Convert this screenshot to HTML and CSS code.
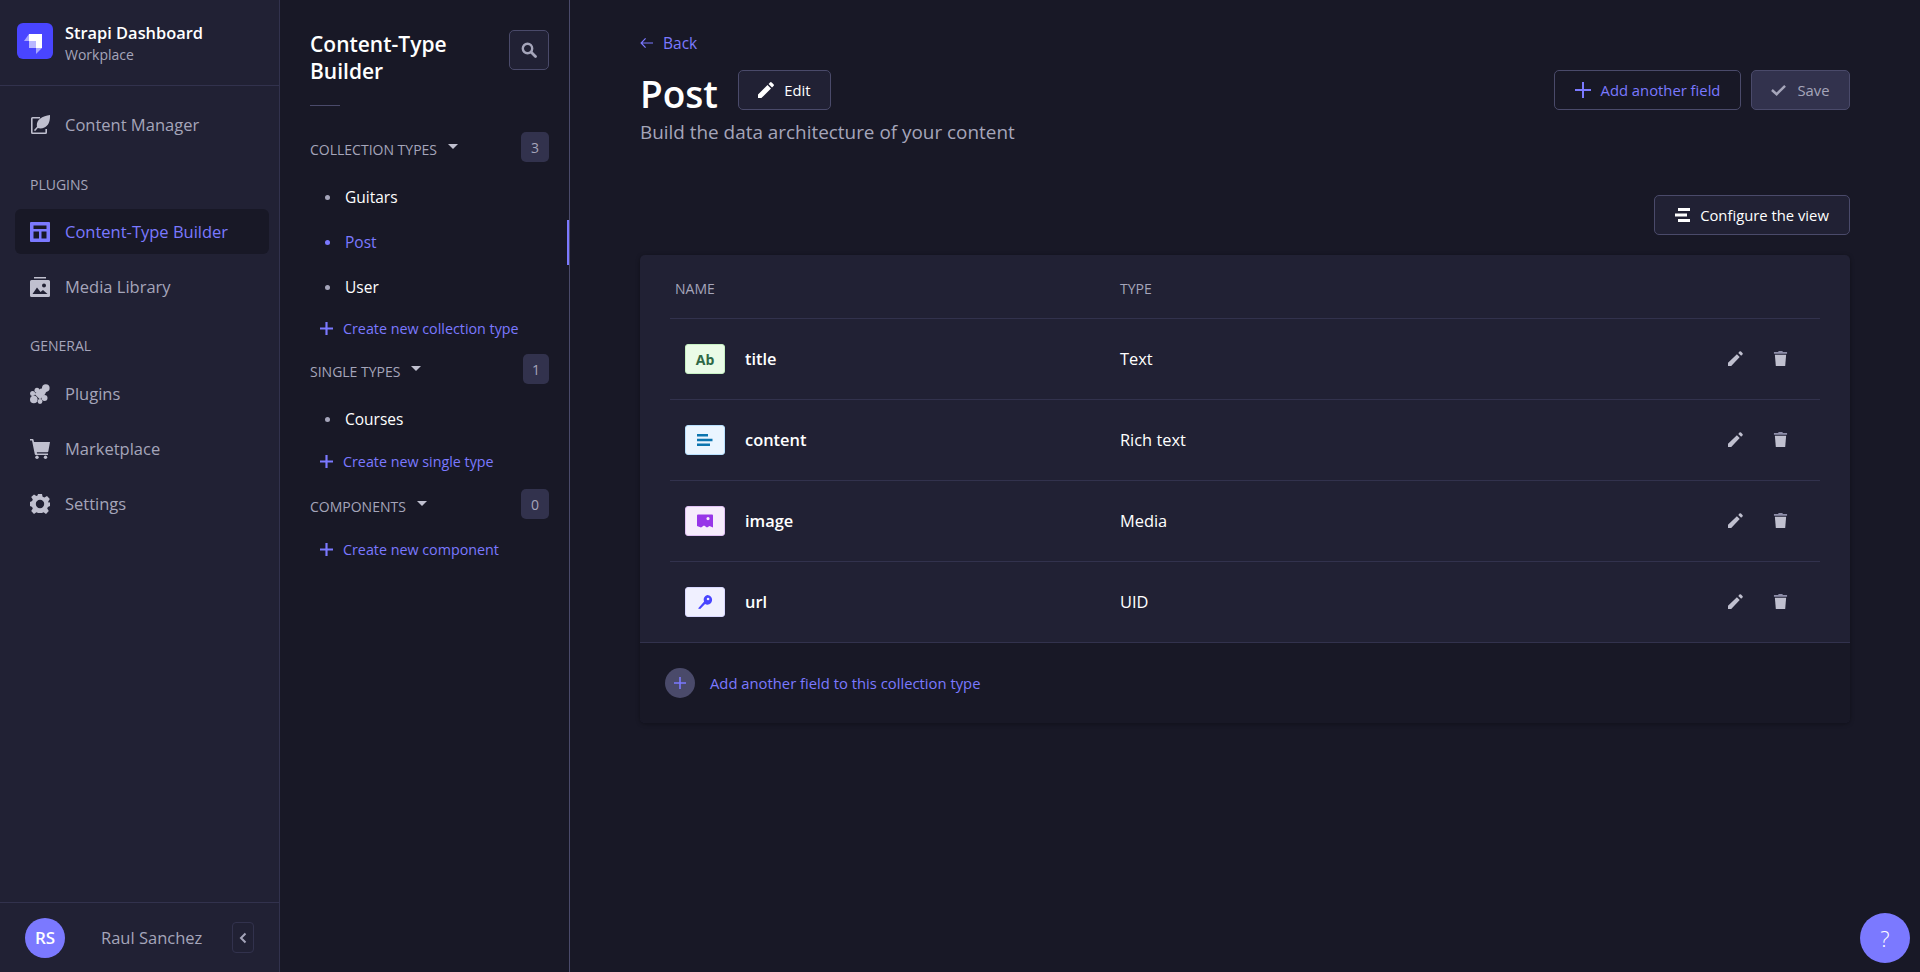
FILE: index.html
```html
<!doctype html>
<html>
<head>
	<meta charset="utf-8">
	<title>Strapi Dashboard</title>
	<link rel="stylesheet" href="styles.css">
</head>
<body>
	<nav class="nav">
		<div class="brand">
			<svg class="logo" viewBox="0 0 36 36"><rect width="36" height="36" rx="6" fill="#4945ff"/><path d="M12 11h13v14h-6v-7h-7z" fill="#fff"/><path d="M12 11v7H7z" fill="#aaa8ff"/><path d="M12 18h7v7h-7z" fill="#b9b8ff"/><path d="M19 25h6l-6 6z" fill="#aaa8ff"/></svg>
			<div>
				<div class="brand-name">Strapi Dashboard</div>
				<div class="brand-sub">Workplace</div>
			</div>
		</div>
		<div class="nav-body">
			<a class="nav-item">
				<svg viewBox="0 0 20 20"><path d="M10 2H2.500A1.500 1.500 0 0 0 1 3.500v14A1.500 1.500 0 0 0 2.500 19h13a1.500 1.500 0 0 0 1.500-1.500V14h-1.600v3.400H2.600V3.600H10z"/><path d="M20 0c.2 5.500-1.200 10.500-5.600 12.600-2.400 1.100-5 1-6.600.4L5 16.200 4 15l3-3.300C6.300 8.600 7.500 5.800 10 3.800 12.800 1.500 16.500.6 20 0z"/></svg>
				Content Manager
			</a>
			<div class="nav-label first">PLUGINS</div>
			<a class="nav-item active">
				<svg viewBox="0 0 20 20"><path fill-rule="evenodd" d="M1 0h18a1 1 0 0 1 1 1v18a1 1 0 0 1-1 1H1a1 1 0 0 1-1-1V1a1 1 0 0 1 1-1zm2.500 3.500v3.500h13V3.500zm0 6v7h5.500v-7zm8 0v7h5v-7z"/></svg>
				Content-Type Builder
			</a>
			<a class="nav-item">
				<svg viewBox="0 0 20 20"><path d="M4 0h12v1.500H4z"/><path fill-rule="evenodd" d="M1.500 3h17A1.500 1.500 0 0 1 20 4.500v14a1.500 1.500 0 0 1-1.500 1.500h-17A1.500 1.500 0 0 1 0 18.500v-14A1.500 1.500 0 0 1 1.500 3zM14 6.500a2 2 0 1 0 0 4 2 2 0 0 0 0-4zM2.500 17h15l-4.500-4-2.500 2-3.500-4.500z"/></svg>
				Media Library
			</a>
			<div class="nav-label">GENERAL</div>
			<a class="nav-item">
				<svg viewBox="0 0 20 20"><path d="M10.500 4.500 15.500 9.500 10 15.500 4.500 10z"/><circle cx="15.800" cy="4" r="3.800"/><circle cx="7" cy="6.300" r="2.500"/><circle cx="3.800" cy="15.500" r="3.800"/><circle cx="14.500" cy="14" r="3"/><circle cx="2.600" cy="9.500" r="2.500"/><circle cx="10" cy="17.500" r="2.400"/><path d="M13 3l4 4-3 4-5-4z"/></svg>
				Plugins
			</a>
			<a class="nav-item">
				<svg viewBox="0 0 20 20"><path d="M0 0h2.500a1 1 0 0 1 1 .8L4 3h16l-1.700 9.500a1 1 0 0 1-1 .8H6.800l.3 1.200H18V16H5.800a1 1 0 0 1-1-.8L2 1.500H0z"/><circle cx="7" cy="18.300" r="1.700"/><circle cx="15.500" cy="18.300" r="1.700"/></svg>
				Marketplace
			</a>
			<a class="nav-item">
				<svg viewBox="0 0 20 20"><path fill-rule="evenodd" d="M8 0h4l.6 2.800 1.800.8L17 2l2.800 3-1.600 2.400.7 1.700L20 8v4l-2.100.9-.7 1.700L18.800 17 16 20l-2.400-1.700-1.700.7H8.100l-1.700-.7L4 20l-2.800-3 1.600-2.400-.7-1.700L0 12V8l2.100-.9.700-1.700L1.200 3 4 .4l2.400 1.600 1.100-.5zM10 5.800a4.200 4.200 0 1 0 0 8.400 4.200 4.200 0 0 0 0-8.400z"/></svg>
				Settings
			</a>
		</div>
		<div class="nav-foot">
			<span class="avatar">RS</span>
			<span class="user">Raul Sanchez</span>
			<span class="collapse"><svg viewBox="0 0 8 12"><path d="M6.500 1.500 2 6l4.500 4.500" fill="none" stroke="#a5a5ba" stroke-width="2"/></svg></span>
		</div>
	</nav>

	<aside class="sub">
		<div class="sub-head">
			<h2>Content-Type Builder</h2>
			<span class="search"><svg viewBox="0 0 16 16"><circle cx="6.500" cy="6.500" r="4.700" fill="none" stroke="#a5a5ba" stroke-width="2.400"/><path d="M10 10l4.500 4.500" stroke="#a5a5ba" stroke-width="2.800" stroke-linecap="round"/></svg></span>
		</div>
		<div class="sub-rule"></div>

		<div class="group-head">
			<span>COLLECTION TYPES</span><i class="caret"></i>
			<b class="count">3</b>
		</div>
		<ul class="links">
			<li>Guitars</li>
			<li class="current">Post</li>
			<li>User</li>
		</ul>
		<a class="create"><svg viewBox="0 0 12 12"><path d="M5 0h2v5h5v2H7v5H5V7H0V5h5z"/></svg>Create new collection type</a>

		<div class="group-head">
			<span>SINGLE TYPES</span><i class="caret"></i>
			<b class="count one">1</b>
		</div>
		<ul class="links">
			<li>Courses</li>
		</ul>
		<a class="create tall"><svg viewBox="0 0 12 12"><path d="M5 0h2v5h5v2H7v5H5V7H0V5h5z"/></svg>Create new single type</a>

		<div class="group-head">
			<span>COMPONENTS</span><i class="caret"></i>
			<b class="count">0</b>
		</div>
		<a class="create only"><svg viewBox="0 0 12 12"><path d="M5 0h2v5h5v2H7v5H5V7H0V5h5z"/></svg>Create new component</a>
	</aside>

	<main class="main">
		<a class="back"><svg viewBox="0 0 14 12"><path d="M6 1 1.200 6 6 11M1.500 6H14" fill="none" stroke="#7b79ff" stroke-width="1.300"/></svg>Back</a>
		<div class="title-row">
			<h1>Post</h1>
			<a class="btn edit"><svg viewBox="0 0 16 16"><path d="M0 16v-3.400L9.500 3l3.500 3.500L3.400 16zM10.600 2l1.400-1.500a1.200 1.200 0 0 1 1.700 0l1.800 1.800a1.200 1.200 0 0 1 0 1.700L14 5.400z" fill="#fff"/></svg>Edit</a>
			<div class="actions">
				<a class="btn add"><svg viewBox="0 0 16 16"><path d="M7 0h2v7h7v2H9v7H7V9H0V7h7z" fill="#7b79ff"/></svg>Add another field</a>
				<a class="btn save"><svg viewBox="0 0 16 12"><path d="M1 6l5 4.500L15 1.500" fill="none" stroke="#a5a5ba" stroke-width="2.600"/></svg>Save</a>
			</div>
		</div>
		<p class="lead">Build the data architecture of your content</p>
		<div class="view-row">
			<a class="btn configure"><svg viewBox="0 0 15 14"><path d="M3 0h12v3H3zM0 5.500h12v3H0zM3 11h12v3H3z" fill="#fff"/></svg>Configure the view</a>
		</div>

		<section class="card">
			<div class="card-head">
				<span class="col-name">NAME</span>
				<span class="col-type">TYPE</span>
			</div>
			<div class="row">
				<span class="col-name"><span class="tag green">Ab</span>title</span>
				<span class="col-type">Text</span>
				<span class="tools">
					<svg viewBox="0 0 16 16"><path d="M0 16v-3.400L9.500 3.500l3 3L3.400 16zM11 2l1.200-1.400a1.200 1.200 0 0 1 1.700 0l1.500 1.500a1.200 1.200 0 0 1 0 1.700L14 5z"/></svg>
					<svg viewBox="0 0 14 16"><path d="M5 0h4l.5 1H14v2H0V1h4.500z" fill="#8e8ea9"/><path d="M1 4h12l-1 12H2z"/></svg>
				</span>
			</div>
			<div class="row">
				<span class="col-name"><span class="tag blue"><svg viewBox="0 0 16 12"><path d="M0 0h11v2.400H0zM0 4.800h15.500v2.400H0zM0 9.600h13v2.400H0z" fill="#0c75af"/></svg></span>content</span>
				<span class="col-type">Rich text</span>
				<span class="tools">
					<svg viewBox="0 0 16 16"><path d="M0 16v-3.400L9.500 3.500l3 3L3.400 16zM11 2l1.200-1.400a1.200 1.200 0 0 1 1.700 0l1.500 1.500a1.200 1.200 0 0 1 0 1.700L14 5z"/></svg>
					<svg viewBox="0 0 14 16"><path d="M5 0h4l.5 1H14v2H0V1h4.500z" fill="#8e8ea9"/><path d="M1 4h12l-1 12H2z"/></svg>
				</span>
			</div>
			<div class="row">
				<span class="col-name"><span class="tag purple"><svg viewBox="0 0 16 13"><path fill-rule="evenodd" d="M1 0h14a1 1 0 0 1 1 1v12l-3.500-1.500-2.500 1.500-3-2-3 2-4-1.500V1a1 1 0 0 1 1-1zm10 2.500a1.600 1.600 0 1 0 0 3.200 1.600 1.600 0 0 0 0-3.200z" fill="#9736e8"/></svg></span>image</span>
				<span class="col-type">Media</span>
				<span class="tools">
					<svg viewBox="0 0 16 16"><path d="M0 16v-3.400L9.500 3.500l3 3L3.400 16zM11 2l1.200-1.400a1.200 1.200 0 0 1 1.700 0l1.500 1.500a1.200 1.200 0 0 1 0 1.700L14 5z"/></svg>
					<svg viewBox="0 0 14 16"><path d="M5 0h4l.5 1H14v2H0V1h4.500z" fill="#8e8ea9"/><path d="M1 4h12l-1 12H2z"/></svg>
				</span>
			</div>
			<div class="row last">
				<span class="col-name"><span class="tag indigo"><svg viewBox="0 0 16 16"><path fill-rule="evenodd" d="M10.500 0a5.500 5.500 0 1 1-2.400 10.400L2.500 16 0 15.500 7 7.500A5.500 5.500 0 0 1 10.500 0zm1 3a1.500 1.500 0 1 0 0 3 1.500 1.500 0 0 0 0-3z" fill="#4945ff"/></svg></span>url</span>
				<span class="col-type">UID</span>
				<span class="tools">
					<svg viewBox="0 0 16 16"><path d="M0 16v-3.400L9.500 3.500l3 3L3.400 16zM11 2l1.200-1.400a1.200 1.200 0 0 1 1.700 0l1.500 1.500a1.200 1.200 0 0 1 0 1.700L14 5z"/></svg>
					<svg viewBox="0 0 14 16"><path d="M5 0h4l.5 1H14v2H0V1h4.500z" fill="#8e8ea9"/><path d="M1 4h12l-1 12H2z"/></svg>
				</span>
			</div>
			<div class="card-foot">
				<span class="round"><svg viewBox="0 0 12 12"><path d="M5.200 0h1.600v5.200H12v1.600H6.800V12H5.200V6.800H0V5.200h5.200z" fill="#7b79ff"/></svg></span>
				Add another field to this collection type
			</div>
		</section>
	</main>

	<a class="help">?</a>
</body>
</html>
```

FILE: styles.css
```css
* {
	box-sizing: border-box;
}

html,
body {
	height: 100%;
	margin: 0;
}

body {
	display: flex;
	overflow: hidden;
	background: #181826;
	color: #fff;
	font-family: "Open Sans", "Noto Sans", sans-serif;
	font-size: 14px;
}

a {
	display: flex;
	align-items: center;
}

/* left nav */
.nav {
	flex: 0 0 280px;
	display: flex;
	flex-direction: column;
	background: #212134;
	border-right: 1px solid #32324d;
}

.brand {
	height: 86px;
	flex: none;
	display: flex;
	align-items: center;
	gap: 12px;
	padding: 0 17px;
	border-bottom: 1px solid #32324d;
}

.logo {
	width: 36px;
	height: 36px;
	margin-top: -4px;
}

.brand-name {
	font-size: 16.400px;
	font-weight: 600;
	line-height: 24px;
}

.brand-sub {
	font-size: 14px;
	line-height: 20px;
	color: #a5a5ba;
}

.nav-body {
	flex: 1;
	padding: 16px 10px 0 15px;
}

.nav-item {
	height: 45px;
	margin-bottom: 10px;
	padding-left: 15px;
	gap: 15px;
	border-radius: 6px;
	color: #a5a5ba;
	font-size: 16.500px;
}

.nav-item svg {
	width: 20px;
	height: 20px;
	fill: #c0c0cf;
	flex: none;
}

.nav-item.active {
	background: #181826;
	color: #7b79ff;
}

.nav-item.active svg {
	fill: #7b79ff;
}

.nav-label {
	height: 20px;
	margin: 27px 0 15px 15px;
	color: #a5a5ba;
	font-size: 14px;
	line-height: 20px;
}

.nav-label.first {
	margin: 28px 0 14px 15px;
}

.nav-foot {
	height: 70px;
	flex: none;
	display: flex;
	align-items: center;
	padding: 0 25px;
	border-top: 1px solid #32324d;
}

.avatar {
	width: 40px;
	height: 40px;
	flex: none;
	display: flex;
	align-items: center;
	justify-content: center;
	border-radius: 50%;
	background: #7b79ff;
	font-size: 17px;
	font-weight: 600;
}

.user {
	margin-left: 36px;
	color: #a5a5ba;
	font-size: 16.500px;
	white-space: nowrap;
}

.collapse {
	width: 22px;
	height: 31px;
	flex: none;
	margin-left: auto;
	display: flex;
	align-items: center;
	justify-content: center;
	border: 1px solid #32324d;
	border-radius: 4px;
}

.collapse svg {
	width: 8px;
	height: 12px;
}

/* sub nav */
.sub {
	flex: 0 0 290px;
	padding: 30px 20px 0 30px;
	border-right: 1px solid #4a4a6a;
	position: relative;
}

.sub-head {
	display: flex;
	justify-content: space-between;
	height: 58px;
}

.sub-head h2 {
	width: 170px;
	margin: 0;
	padding-top: 1px;
	font-size: 21px;
	font-weight: 600;
	line-height: 27px;
}

.search {
	width: 40px;
	height: 40px;
	display: flex;
	align-items: center;
	justify-content: center;
	background: #212134;
	border: 1px solid #4a4a6a;
	border-radius: 5px;
}

.search svg {
	width: 16px;
	height: 16px;
}

.sub-rule {
	width: 30px;
	height: 1px;
	margin-top: 17px;
	background: #4a4a6a;
}

.group-head {
	height: 30px;
	display: flex;
	align-items: center;
	color: #a5a5ba;
	font-size: 14px;
}

.group-head span {
	padding-top: 4px;
}

.sub-rule + .group-head {
	margin-top: 26px;
}

.caret {
	width: 0;
	height: 0;
	margin: -2px 0 0 11px;
	border: 5px solid transparent;
	border-top: 5px solid #c0c0cf;
	border-bottom: 0;
}

.count {
	margin-left: auto;
	width: 28px;
	height: 30px;
	display: flex;
	align-items: center;
	justify-content: center;
	background: #32324d;
	border-radius: 5px;
	color: #a5a5ba;
	font-size: 14px;
	font-weight: 400;
}

.count.one {
	width: 26px;
}

.links {
	list-style: none;
	margin: 0;
	padding: 13px 0 0;
}

.links li {
	position: relative;
	height: 45px;
	padding-left: 35px;
	line-height: 45px;
	font-size: 15.500px;
}

.links li::before {
	content: "";
	position: absolute;
	left: 15px;
	top: 20px;
	width: 5px;
	height: 5px;
	border-radius: 50%;
	background: #a5a5ba;
}

.links li.current {
	color: #7b79ff;
}

.links li.current::before {
	background: #7b79ff;
}

.links li.current::after {
	content: "";
	position: absolute;
	right: -20px;
	top: 0;
	width: 2px;
	height: 45px;
	background: #7b79ff;
}

.create {
	height: 40px;
	padding-left: 10px;
	gap: 10px;
	color: #7b79ff;
	font-size: 14.300px;
}

.create svg {
	width: 13px;
	height: 13px;
	fill: #7b79ff;
}

.links + .create {
	margin-top: -2px;
	margin-bottom: 6px;
}

.links + .create.tall {
	margin-top: -1px;
	margin-bottom: 8px;
}

.create.only {
	margin-top: 10px;
}

/* main */
.main {
	flex: 1;
	padding: 26px 70px 0;
	min-width: 0;
}

.back {
	height: 34px;
	gap: 10px;
	color: #7b79ff;
	font-size: 15.500px;
}

.back svg {
	width: 13px;
	height: 12px;
}

.title-row {
	display: flex;
	align-items: center;
	height: 40px;
	margin-top: 10px;
}

h1 {
	margin: 7px 20px 0 0;
	font-size: 37px;
	font-weight: 600;
	line-height: 40px;
}

.btn {
	height: 40px;
	justify-content: center;
	border: 1px solid #4a4a6a;
	border-radius: 5px;
	font-size: 14.800px;
	font-weight: 500;
}

.edit {
	width: 93px;
	gap: 10px;
	background: #212134;
}

.edit svg {
	width: 16px;
	height: 16px;
}

.actions {
	margin-left: auto;
	display: flex;
	gap: 10px;
}

.add {
	width: 187px;
	gap: 10px;
	color: #7b79ff;
}

.add svg {
	width: 16px;
	height: 16px;
}

.save {
	width: 99px;
	gap: 11px;
	background: #32324d;
	color: #a5a5ba;
}

.save svg {
	width: 15px;
	height: 12px;
}

.lead {
	margin: 7px 0 0;
	color: #a5a5ba;
	font-size: 18.900px;
	line-height: 30px;
}

.view-row {
	display: flex;
	justify-content: flex-end;
	margin-top: 48px;
}

.configure {
	width: 196px;
	gap: 10px;
	background: #212134;
}

.configure svg {
	width: 15px;
	height: 14px;
}

.card {
	margin-top: 20px;
	background: #212134;
	border-radius: 5px;
	overflow: hidden;
	box-shadow: 0 1px 4px rgba(3, 3, 5, 0.35);
}

.card-head,
.row {
	display: flex;
	align-items: center;
	margin: 0 30px;
	border-bottom: 1px solid #32324d;
}

.card-head {
	height: 64px;
	padding: 4px 0 0 5px;
	color: #a5a5ba;
	font-size: 14px;
}

.row {
	height: 81px;
	padding: 0 0 2px 15px;
	font-size: 16.400px;
}

.row.last {
	margin: 0;
	padding-left: 45px;
	padding-right: 30px;
}

.col-name {
	display: flex;
	align-items: center;
}

.card-head .col-name {
	width: 445px;
}

.row .col-name {
	width: 435px;
	font-weight: 600;
}

.tag {
	width: 40px;
	height: 30px;
	margin: 2px 20px 0 0;
	display: flex;
	align-items: center;
	justify-content: center;
	border-radius: 3px;
	border: 1px solid transparent;
	font-size: 14px;
	font-weight: 700;
}

.tag svg {
	width: 16px;
	height: 14px;
}

.green {
	background: #eafbe7;
	border-color: #c6f0c2;
	color: #2f6846;
}

.blue {
	background: #eaf5ff;
	border-color: #b8e1ff;
}

.purple {
	background: #f6ecfc;
	border-color: #e0c1f4;
}

.indigo {
	background: #f0f0ff;
	border-color: #d9d8ff;
}

.col-type {
	flex: 1;
}

.tools {
	display: flex;
	align-items: center;
	gap: 30px;
	margin-right: 32px;
}

.tools svg {
	height: 15px;
	width: 15px;
	fill: #c0c0cf;
}

.card-foot {
	height: 80px;
	display: flex;
	align-items: center;
	padding-left: 25px;
	gap: 15px;
	background: #181826;
	color: #7b79ff;
	font-size: 14.800px;
}

.round {
	width: 30px;
	height: 30px;
	display: flex;
	align-items: center;
	justify-content: center;
	background: #4a4a6a;
	border-radius: 50%;
}

.round svg {
	width: 12px;
	height: 12px;
}

.help {
	position: absolute;
	right: 10px;
	bottom: 9px;
	width: 50px;
	height: 50px;
	justify-content: center;
	border-radius: 50%;
	background: #7b79ff;
	font-size: 22px;
	font-weight: 300;
}
```
